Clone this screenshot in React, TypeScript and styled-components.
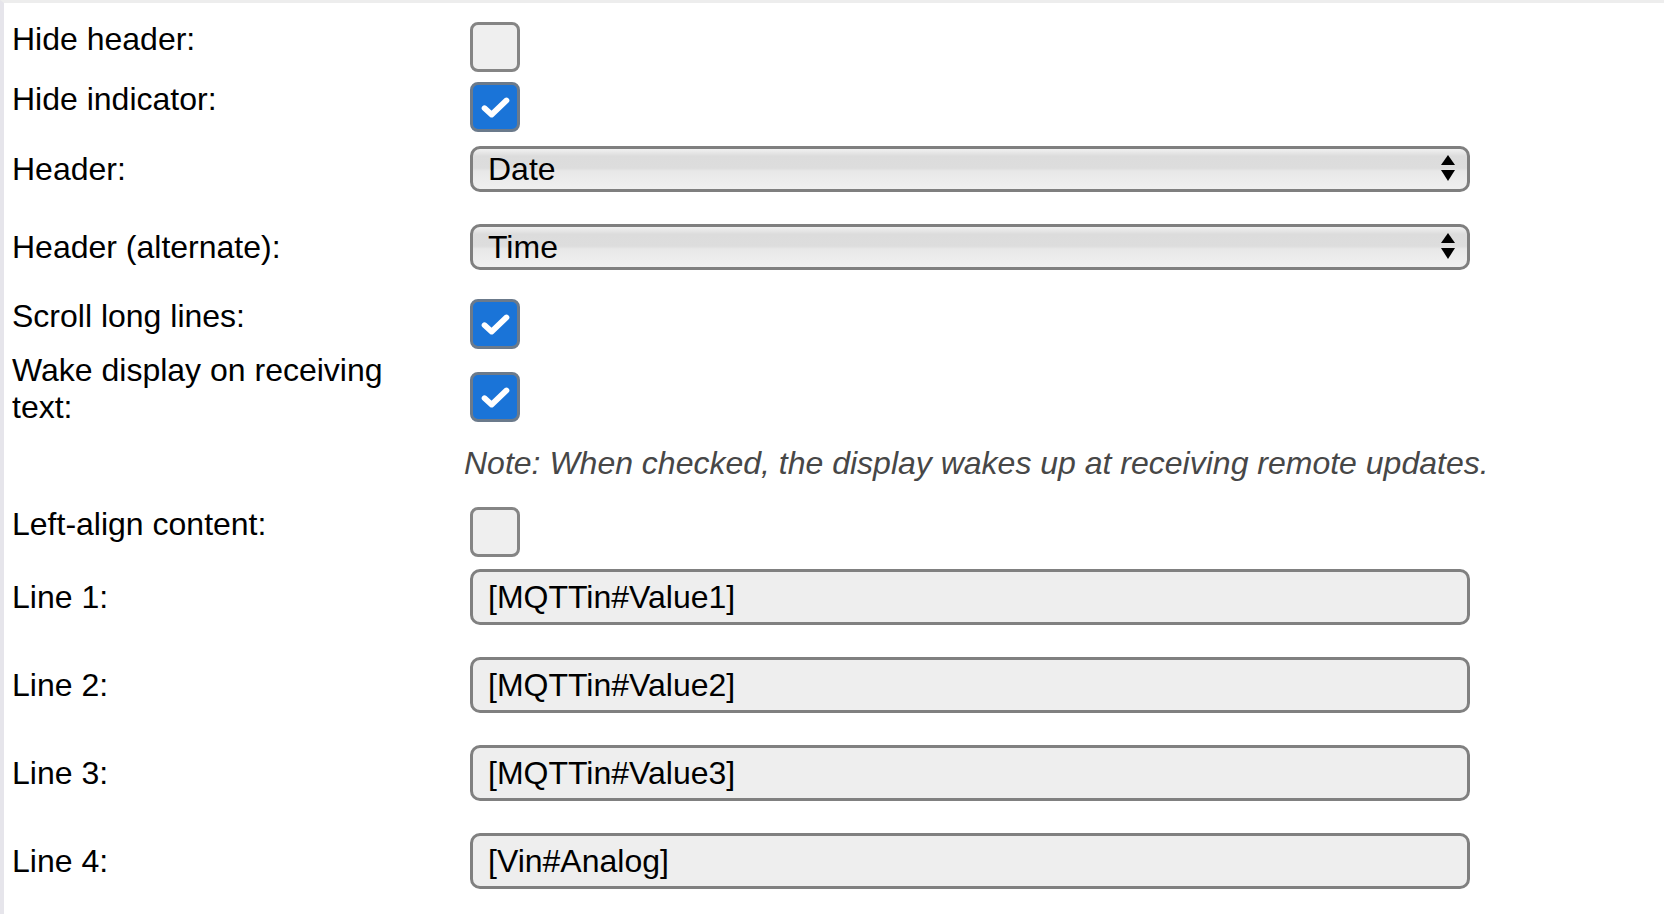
import { createGlobalStyle, styled } from 'styled-components';

const GlobalStyle = createGlobalStyle`
  html, body {
    margin: 0;
    padding: 0;
    background: #fff;
  }
  body {
    font-family: 'Liberation Sans', Arial, Helvetica, sans-serif;
  }
`;

const CheckIcon = () => (
  <svg width="31" height="31" viewBox="0 0 24 24" fill="none">
    <path d="M3.5 12.5L9 17.5L20.5 6.5" stroke="#fff" strokeWidth="4.4" strokeLinecap="round" strokeLinejoin="round" />
  </svg>
);

const SelectArrows = () => (
  <svg width="16" height="30" viewBox="0 0 16 30">
    <polygon points="1,11 8,1 15,11" fill="#000" />
    <polygon points="1,16 15,16 8,27" fill="#000" />
  </svg>
);

const App = () => {
  return (
    <>
      <GlobalStyle />
      <Page>
        <Row>
          <Label>Hide header:</Label>
          <CheckBox />
        </Row>
        <Row $gap={6}>
          <Label>Hide indicator:</Label>
          <CheckBox $checked>
            <CheckIcon />
          </CheckBox>
        </Row>
        <Row $gap={20}>
          <Label>Header:</Label>
          <Select>
            <span>Date</span>
            <SelectArrows />
          </Select>
        </Row>
        <Row $gap={32}>
          <Label>Header (alternate):</Label>
          <Select>
            <span>Time</span>
            <SelectArrows />
          </Select>
        </Row>
        <Row $gap={19}>
          <Label>Scroll long lines:</Label>
          <CheckBox $checked>
            <CheckIcon />
          </CheckBox>
        </Row>
        <Row $gap={9}>
          <Label>Wake display on receiving text:</Label>
          <CheckBox $checked>
            <CheckIcon />
          </CheckBox>
        </Row>
        <Row $gap={19}>
          <Label />
          <Note>Note: When checked, the display wakes up at receiving remote updates.</Note>
        </Row>
        <Row $gap={15}>
          <Label>Left-align content:</Label>
          <CheckBox />
        </Row>
        <Row $gap={18}>
          <Label>Line 1:</Label>
          <TextInput>[MQTTin#Value1]</TextInput>
        </Row>
        <Row $gap={32}>
          <Label>Line 2:</Label>
          <TextInput>[MQTTin#Value2]</TextInput>
        </Row>
        <Row $gap={32}>
          <Label>Line 3:</Label>
          <TextInput>[MQTTin#Value3]</TextInput>
        </Row>
        <Row $gap={32}>
          <Label>Line 4:</Label>
          <TextInput>[Vin#Analog]</TextInput>
        </Row>
      </Page>
    </>
  );
};

export default App;

const Page = styled.div`
  box-sizing: border-box;
  min-height: 100vh;
  border-left: 4px solid #e6e5eb;
  border-top: 3px solid #ededed;
  padding: 9px 0 0 8px;
`;

const Row = styled.div<{ $gap?: number }>`
  display: grid;
  grid-template-columns: 452px 1006px;
  align-items: center;
  margin-top: ${(p) => p.$gap ?? 0}px;
`;

const Label = styled.div`
  font-size: 32px;
  line-height: 37px;
  color: #000;
  padding-right: 40px;
`;

const CheckBox = styled.span<{ $checked?: boolean }>`
  box-sizing: border-box;
  width: 50px;
  height: 50px;
  margin: 10px 0 -6px 6px;
  border-radius: 8px;
  border: 3px solid ${(p) => (p.$checked ? '#6b7a8b' : '#858585')};
  background: ${(p) => (p.$checked ? '#1a74d8' : '#efefef')};
  display: flex;
  align-items: center;
  justify-content: center;
`;

const Select = styled.div`
  box-sizing: border-box;
  width: 1000px;
  height: 46px;
  margin-left: 6px;
  padding: 0 11px 0 15px;
  border: 3px solid #7f7f7f;
  border-radius: 10px;
  background: linear-gradient(#f1f1f1 0%, #dcdcdc 18%, #dddddd 48%, #e8e8e8 55%, #f0f0f0 100%);
  display: flex;
  align-items: center;
  justify-content: space-between;
  font-size: 32px;
  line-height: 37px;
  color: #000;
`;

const TextInput = styled.div`
  box-sizing: border-box;
  width: 1000px;
  height: 56px;
  margin-left: 6px;
  padding: 0 15px;
  border: 3px solid #808080;
  border-radius: 10px;
  background: #eeeeee;
  display: flex;
  align-items: center;
  font-size: 32px;
  color: #000;
`;

const Note = styled.div`
  font-size: 32px;
  line-height: 37px;
  font-style: italic;
  color: #474747;
  white-space: nowrap;
`;
